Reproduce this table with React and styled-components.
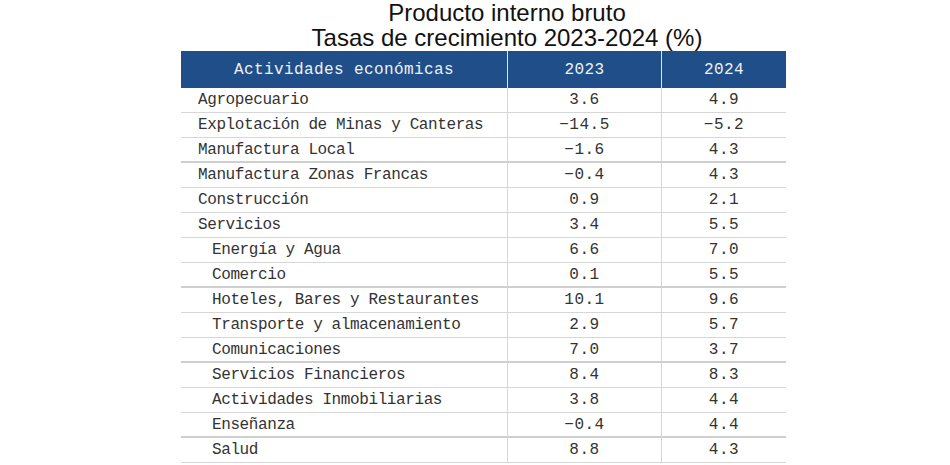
import styled, { createGlobalStyle } from "styled-components";

const GlobalStyle = createGlobalStyle`
  html, body {
    margin: 0;
    padding: 0;
    background: #ffffff;
  }
`

const filas = [
  { nombre: "Agropecuario", a: "3.6", b: "4.9" },
  { nombre: "Explotación de Minas y Canteras", a: "−14.5", b: "−5.2" },
  { nombre: "Manufactura Local", a: "−1.6", b: "4.3", grueso: true },
  { nombre: "Manufactura Zonas Francas", a: "−0.4", b: "4.3" },
  { nombre: "Construcción", a: "0.9", b: "2.1" },
  { nombre: "Servicios", a: "3.4", b: "5.5" },
  { nombre: "Energía y Agua", a: "6.6", b: "7.0", sub: true },
  { nombre: "Comercio", a: "0.1", b: "5.5", sub: true, grueso: true },
  { nombre: "Hoteles, Bares y Restaurantes", a: "10.1", b: "9.6", sub: true },
  { nombre: "Transporte y almacenamiento", a: "2.9", b: "5.7", sub: true },
  { nombre: "Comunicaciones", a: "7.0", b: "3.7", sub: true, grueso: true },
  { nombre: "Servicios Financieros", a: "8.4", b: "8.3", sub: true },
  { nombre: "Actividades Inmobiliarias", a: "3.8", b: "4.4", sub: true },
  { nombre: "Enseñanza", a: "−0.4", b: "4.4", sub: true, grueso: true },
  { nombre: "Salud", a: "8.8", b: "4.3", sub: true },
]

export default function App(){
    return(
        <Pagina>
            <GlobalStyle/>
            <Titulo>
                <p>Producto interno bruto</p>
                <p>Tasas de crecimiento 2023-2024 (%)</p>
            </Titulo>
            <Tabla>
                <Encabezado>
                    <CeldaEnc>Actividades económicas</CeldaEnc>
                    <CeldaEnc>2023</CeldaEnc>
                    <CeldaEnc>2024</CeldaEnc>
                </Encabezado>
                {filas.map(f => (
                    <Fila key={f.nombre} $grueso={f.grueso}>
                        <Nombre $sub={f.sub}>{f.nombre}</Nombre>
                        <Valor>{f.a}</Valor>
                        <Valor>{f.b}</Valor>
                    </Fila>
                ))}
            </Tabla>
        </Pagina>
    )
}

const Pagina = styled.div`
  width: 950px;
  height: 465px;
  overflow: hidden;
  display: flex;
  flex-direction: column;
  align-items: flex-start;
  padding-left: 181px;
  box-sizing: border-box;
`
const Titulo = styled.div`
  width: 652px;
  margin-bottom: 1px;
  text-align: center;
  font-family: "Liberation Sans", Arial, sans-serif;
  font-size: 24px;
  line-height: 25px;
  color: #111111;
  p {
    margin: 0;
  }
`
const Tabla = styled.div`
  width: 605px;
  display: flex;
  flex-direction: column;
`
const Encabezado = styled.div`
  display: grid;
  grid-template-columns: 326px 154px 125px;
  height: 37px;
  background-color: #1f4e88;
`
const CeldaEnc = styled.div`
  display: flex;
  align-items: center;
  justify-content: center;
  color: #eef2f8;
  font-family: "Liberation Mono", "Courier New", monospace;
  font-size: 16px;
  letter-spacing: 0.4px;
  & + & {
    border-left: 1px solid #dfe6f0;
  }
`
const Fila = styled.div`
  display: grid;
  grid-template-columns: 326px 154px 125px;
  height: 25px;
  box-sizing: border-box;
  border-bottom: ${p => p.$grueso ? "2px solid #cfcfcf" : "1px solid #d6d6d6"};
  &:first-of-type {
    height: 24px;
  }
  font-family: "Liberation Mono", "Courier New", monospace;
  font-size: 16px;
  color: #333333;
`
const Nombre = styled.div`
  display: flex;
  align-items: center;
  padding-left: ${p => p.$sub ? "31px" : "17px"};
  letter-spacing: -0.4px;
  white-space: nowrap;
`
const Valor = styled.div`
  display: flex;
  align-items: center;
  justify-content: center;
  border-left: 1px solid #d6d6d6;
  letter-spacing: 0.5px;
`
